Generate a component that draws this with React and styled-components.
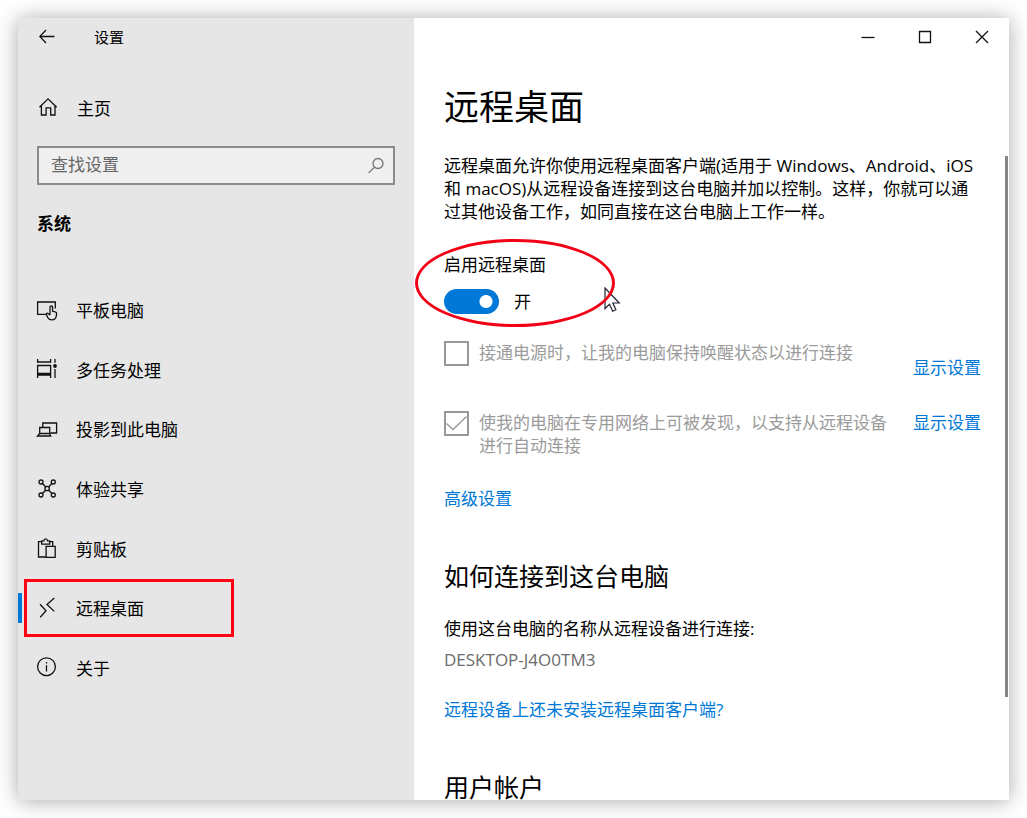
import React from 'react';
import styled, { createGlobalStyle } from 'styled-components';

const GlobalStyle = createGlobalStyle`
  *, *::before, *::after { box-sizing: border-box; }
  body {
    margin: 0;
    background: #fff;
    color: #000;
    font: 17px/23px "Open Sans", "Noto Sans CJK SC", sans-serif;
  }
  h1, h2, p, ul { margin: 0; padding: 0; font-weight: 400; }
  button { font: inherit; color: inherit; }
`;

const Desktop = styled.div`
  height: 100vh;
  padding: 18px;
`;

const Window = styled.div`
  position: relative;
  display: flex;
  height: 100%;
  background: #fff;
  box-shadow: 0 1px 20px rgba(0, 0, 0, 0.34);
`;

const Sidebar = styled.aside`
  flex: 0 0 396px;
  background: #e6e6e6;
`;

const TitleBar = styled.header`
  display: flex;
  align-items: center;
  height: 38px;
  gap: ${(p) => (p.$gap || 0)}px;
  padding-left: ${(p) => (p.$inset || 0)}px;
  justify-content: ${(p) => (p.$end ? 'flex-end' : 'flex-start')};
`;

const IconButton = styled.button`
  display: grid;
  place-items: center;
  width: ${(p) => p.$width}px;
  height: 38px;
  padding: 0;
  border: 0;
  background: none;
`;

const AppName = styled.span`
  font-size: 15px;
`;

const Icon = styled.svg`
  display: block;
  flex: none;
  fill: none;
  stroke: ${(p) => p.$color || '#111'};
  stroke-width: 1.3;
`;

const HomeLink = styled.a`
  display: flex;
  align-items: center;
  gap: 17px;
  height: 24px;
  margin: 40px 18px 0;
  color: inherit;
  text-decoration: none;
`;

const SearchBox = styled.label`
  display: flex;
  align-items: center;
  height: 39px;
  margin: 26px 19px 0;
  padding: 0 9px 2px 12px;
  border: 2px solid #8b8b8b;
  background: #efefef;
`;

const SearchInput = styled.input`
  flex: 1;
  min-width: 0;
  padding: 0;
  border: 0;
  outline: 0;
  background: none;
  font: inherit;
  &::placeholder { color: #666; opacity: 1; }
`;

const GroupTitle = styled.h2`
  margin: 27px 19px 0;
  font-size: 17px;
  font-weight: 700;
`;

const NavList = styled.ul`
  display: grid;
  grid-auto-rows: 1fr;
  height: 417px;
  margin-top: 46px;
  list-style: none;
`;

const NavItem = styled.li`
  position: relative;
  display: grid;
`;

const NavLink = styled.a`
  display: flex;
  align-items: center;
  gap: 16px;
  padding-left: 18px;
  color: inherit;
  text-decoration: none;
`;

const ActiveBar = styled.span`
  position: absolute;
  left: 0;
  top: 14px;
  width: 4px;
  height: 30px;
  background: #0078d7;
`;

const RedBox = styled.span`
  position: absolute;
  left: 6px;
  top: 0;
  width: 210px;
  height: 58px;
  border: 3px solid #ff0014;
  pointer-events: none;
`;

const Main = styled.main`
  flex: 1;
  min-width: 0;
  overflow: hidden;
`;

const Content = styled.div`
  padding: 28px 28px 0 30px;
`;

const PageTitle = styled.h1`
  font-size: 35px;
  line-height: 46px;
`;

const Description = styled.p`
  margin-top: 24px;
`;

const ToggleBlock = styled.section`
  position: relative;
  margin-top: 30px;
`;

const ToggleRow = styled.label`
  display: flex;
  align-items: center;
  gap: 15px;
  height: 25px;
  margin-top: 13px;
`;

const Switch = styled.input`
  appearance: none;
  width: 55px;
  height: 25px;
  margin: 0;
  border-radius: 13px;
  background: radial-gradient(circle at 42px 50%, #fff 6px, #0078d7 7px);
`;

const RedEllipse = styled.span`
  position: absolute;
  left: -29px;
  top: -14px;
  width: 200px;
  height: 88px;
  border: 3px solid #f20016;
  border-radius: 50%;
  pointer-events: none;
`;

const Pointer = styled.svg`
  position: absolute;
  left: 160px;
  top: 34px;
`;

const Options = styled.div`
  display: grid;
  gap: 24px;
  margin-top: 27px;
`;

const OptionRow = styled.div`
  display: flex;
  align-items: flex-start;
  justify-content: space-between;
  gap: 12px;
  min-height: 46px;
`;

const OptionLabel = styled.label`
  display: flex;
  gap: 10px;
  color: #9b9b9b;
`;

const CheckWrap = styled.span`
  position: relative;
  flex: none;
  width: 25px;
  height: 25px;
`;

const CheckBox = styled.input`
  appearance: none;
  display: block;
  width: 25px;
  height: 25px;
  margin: 0;
  border: 2px solid #999;
`;

const CheckMark = styled.svg`
  position: absolute;
  inset: 0;
  fill: none;
  stroke: #999;
  stroke-width: 1.4;
`;

const Link = styled.a`
  flex: none;
  color: #0078d7;
  text-decoration: none;
`;

const LowLink = styled(Link)`
  margin-top: 15px;
`;

const Paragraph = styled.p`
  margin-top: ${(p) => p.$gap}px;
  color: ${(p) => (p.$muted ? '#6b6b6b' : 'inherit')};
`;

const SectionTitle = styled.h2`
  margin-top: 49px;
  font-size: 25px;
  line-height: 34px;
`;

const ScrollThumb = styled.span`
  position: absolute;
  right: 1px;
  top: 138px;
  bottom: 103px;
  width: 3px;
  background: #858585;
`;

const shapes = {
  home: <path d="M3.5 11.2 12 2.8l8.7 8.4M5.4 9.6V19h4.7v-7.2h4.6V19H19V9.6" />,
  tablet: (
    <path d="M10 15.4H1.6V3h17.7v6.5M14 16V8.3a1.3 1.3 0 0 1 2.6 0v4l2.6.6c1 .2 1.5.8 1.4 1.9l-.4 2.6a4.4 4.4 0 0 1-4.4 3.4c-2 0-3.3-.8-4.2-2.6l-1.3-2.9c-.3-1 1-1.6 1.8-.8L14 16" />
  ),
  multitask: (
    <>
      <path d="M1.6 7.5h13v8h-13zM1.6 1v3h13V1M1.6 20v-3h13v3M19 1v3.700M19 11v9" />
      <circle cx="19" cy="8" r="1.9" fill="#111" stroke="none" />
    </>
  ),
  project: <path d="M6.8 9V5h13.800v10h-6M3.700 15.500V9.500h10v6zM3.700 15.500 1.500 18h13.200l-1-2.500" />,
  share: (
    <>
      <circle cx="5" cy="5" r="2" />
      <circle cx="17.3" cy="5" r="2" />
      <circle cx="5" cy="18" r="2" />
      <circle cx="17.3" cy="18" r="2" />
      <circle cx="11.1" cy="11.5" r="2.2" />
      <path d="m6.4 6.5 3.2 3.3M15.9 6.5l-3.2 3.3M6.400 16.500l3.200-3.300M15.900 16.500l-3.200-3.300" />
    </>
  ),
  clipboard: (
    <path d="M10 20H2.5V4.600h3.200M13.700 4.600h3v4.600M5.700 7.200V3.800h2.200c.2-2.600 3.400-2.600 3.600 0h2.200v3.400zM10.100 9.300h9.100v11h-9.100z" />
  ),
  remote: <path d="m4 7.3 6 6.400-5.800 6.600M18.300 1 11 7.500l7.300 6.900" />,
  info: (
    <>
      <circle cx="10.5" cy="10.7" r="8.9" />
      <path d="M10.500 9.300v6.200M10.500 6v1.600" />
    </>
  ),
};

const navigation = [
  ['tablet', '平板电脑'],
  ['multitask', '多任务处理'],
  ['project', '投影到此电脑'],
  ['share', '体验共享'],
  ['clipboard', '剪贴板'],
  ['remote', '远程桌面'],
  ['info', '关于'],
];

function Glyph({ name }) {
  return (
    <Icon width="24" height="24" viewBox="0 0 24 24" aria-hidden="true">
      {shapes[name]}
    </Icon>
  );
}

export default function App() {
  return (
    <Desktop>
      <GlobalStyle />
      <Window>
        <Sidebar>
          <TitleBar $inset={9} $gap={27}>
            <IconButton $width={40} aria-label="返回">
              <Icon width="16" height="16" viewBox="0 0 16 16">
                <path d="M15.5 7.5H1M7 1 .8 7.5 7 14" />
              </Icon>
            </IconButton>
            <AppName>设置</AppName>
          </TitleBar>
          <HomeLink href="#home">
            <Glyph name="home" />
            主页
          </HomeLink>
          <SearchBox>
            <SearchInput type="search" placeholder="查找设置" aria-label="查找设置" />
            <Icon $color="#777" width="16" height="16" viewBox="0 0 16 16" aria-hidden="true">
              <circle cx="10" cy="6.5" r="5" />
              <path d="M6.500 10.200.6 15.900" />
            </Icon>
          </SearchBox>
          <GroupTitle>系统</GroupTitle>
          <nav>
            <NavList>
              {navigation.map(([icon, label]) => {
                const active = icon === 'remote';
                return (
                  <NavItem key={icon}>
                    <NavLink href={`#${icon}`} aria-current={active ? 'page' : undefined}>
                      <Glyph name={icon} />
                      {label}
                    </NavLink>
                    {active && <ActiveBar />}
                    {active && <RedBox />}
                  </NavItem>
                );
              })}
            </NavList>
          </nav>
        </Sidebar>
        <Main>
          <TitleBar $end $gap={2}>
            <IconButton $width={55} aria-label="最小化">
              <Icon width="14" height="14" viewBox="0 0 14 14"><path d="M.5 7.5h13" /></Icon>
            </IconButton>
            <IconButton $width={55} aria-label="最大化">
              <Icon width="14" height="14" viewBox="0 0 14 14"><path d="M1.500 1.500h11v11h-11z" /></Icon>
            </IconButton>
            <IconButton $width={55} aria-label="关闭">
              <Icon width="14" height="14" viewBox="0 0 14 14"><path d="m1 1 12 12M13 1 1 13" /></Icon>
            </IconButton>
          </TitleBar>
          <Content>
            <PageTitle>远程桌面</PageTitle>
            <Description>
              远程桌面允许你使用远程桌面客户端(适用于 Windows、Android、iOS 和 macOS)从远程设备连接到这台电脑并加以控制。这样，你就可以通过其他设备工作，如同直接在这台电脑上工作一样。
            </Description>
            <ToggleBlock>
              <p id="enable">启用远程桌面</p>
              <ToggleRow>
                <Switch type="checkbox" role="switch" defaultChecked aria-labelledby="enable" />
                开
              </ToggleRow>
              <Pointer width="17" height="26" viewBox="0 0 17 26" aria-hidden="true">
                <path
                  d="M1 1v20.500l4.500-4.300 3.200 7 3.200-1.400-3.100-6.800h6.400z"
                  fill="#fff"
                  stroke="#223"
                  strokeWidth="1.2"
                />
              </Pointer>
              <RedEllipse />
            </ToggleBlock>
            <Options>
              <OptionRow>
                <OptionLabel>
                  <CheckWrap><CheckBox type="checkbox" disabled /></CheckWrap>
                  接通电源时，让我的电脑保持唤醒状态以进行连接
                </OptionLabel>
                <LowLink href="#power">显示设置</LowLink>
              </OptionRow>
              <OptionRow>
                <OptionLabel>
                  <CheckWrap>
                    <CheckBox type="checkbox" disabled defaultChecked />
                    <CheckMark width="25" height="25" viewBox="0 0 25 25" aria-hidden="true">
                      <path d="m2.500 12.500 6.500 6L22.500 5.500" />
                    </CheckMark>
                  </CheckWrap>
                  使我的电脑在专用网络上可被发现，以支持从远程设备进行自动连接
                </OptionLabel>
                <Link href="#network">显示设置</Link>
              </OptionRow>
            </Options>
            <Paragraph $gap={30}><Link href="#advanced">高级设置</Link></Paragraph>
            <SectionTitle>如何连接到这台电脑</SectionTitle>
            <Paragraph $gap={24}>使用这台电脑的名称从远程设备进行连接:</Paragraph>
            <Paragraph $gap={8} $muted>DESKTOP-J4O0TM3</Paragraph>
            <Paragraph $gap={27}><Link href="#client">远程设备上还未安装远程桌面客户端?</Link></Paragraph>
            <SectionTitle>用户帐户</SectionTitle>
          </Content>
        </Main>
        <ScrollThumb />
      </Window>
    </Desktop>
  );
}
